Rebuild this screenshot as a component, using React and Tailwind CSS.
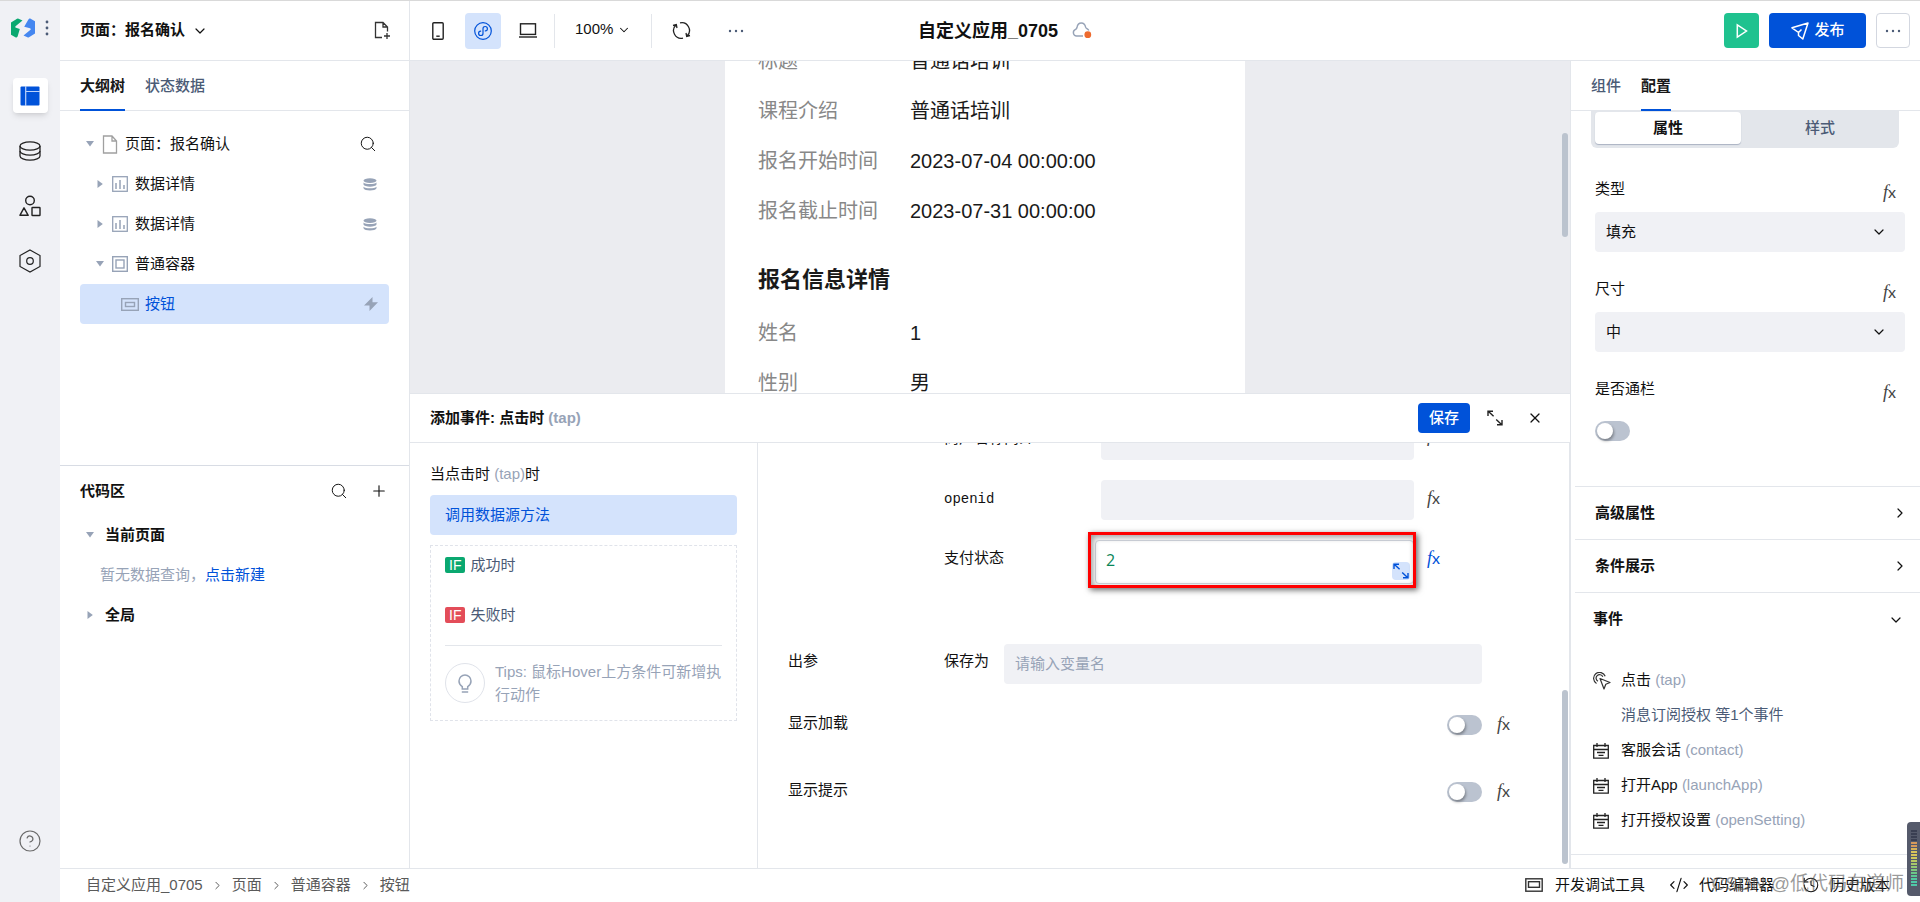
import React, { useState } from 'react';
import {
  ChevronDown,
  ChevronRight,
  CircleHelp,
  CodeXml,
  History,
  Plus,
  Search,
  X,
} from 'lucide-react';

const previewTop = [
  { label: '标题', value: '普通话培训' },
  { label: '课程介绍', value: '普通话培训' },
  { label: '报名开始时间', value: '2023-07-04 00:00:00' },
  { label: '报名截止时间', value: '2023-07-31 00:00:00' },
];

const previewBottom = [
  { label: '姓名', value: '1' },
  { label: '性别', value: '男' },
];

const otherEvents = [
  { name: '客服会话', code: '(contact)' },
  { name: '打开App', code: '(launchApp)' },
  { name: '打开授权设置', code: '(openSetting)' },
];

const Logo = () => (
  <svg width="24" height="20" viewBox="0 0 24 20">
    <path d="M0 4.5 6 0.8Q6.8 0.4 7.6 0.8L11.5 2.6 4.5 8.2Q3.6 9.3 5 9.8L8.8 11 6.6 18.6 5.6 19.6 4.8 19.5 0 16.8Z" fill="#0aa870" />
    <path d="M24 15.5 18 19.2Q17.2 19.6 16.4 19.2L12.5 17.4 19.5 11.8Q20.4 10.7 19 10.2L13.2 8.8 17.4 1.4 18.4 0.4 19.2 0.5 24 3.2Z" fill="#4587f0" />
  </svg>
);

const Dots = ({ vertical }) => (
  <svg
    width={vertical ? 4 : 18}
    height={vertical ? 16 : 4}
    viewBox={vertical ? '0 0 4 16' : '0 0 18 4'}
    fill="#4b5b76"
  >
    {[2, 8, 14].map((p) =>
      vertical ? <circle key={p} cx="2" cy={p} r="1.4" /> : <circle key={p} cx={p + 1} cy="2" r="1.2" />
    )}
  </svg>
);

const LayoutIcon = () => (
  <svg width="20" height="20" viewBox="0 0 20 20">
    <rect x="0.5" y="0.5" width="19" height="19" rx="1" fill="#0052d9" />
    <path d="M5.7 0V20M5.7 5.5H20" stroke="#bcd2fa" strokeWidth="1.2" />
  </svg>
);

const DatabaseIcon = () => (
  <svg width="22" height="20" viewBox="0 0 22 20" fill="none" stroke="#222" strokeWidth="1.3">
    <ellipse cx="11" cy="5" rx="10" ry="4.2" />
    <path d="M1 5V15C1 17.3 5.5 19.2 11 19.2S21 17.3 21 15V5" />
    <path d="M1 10C1 12.3 5.5 14.2 11 14.2S21 12.3 21 10" />
  </svg>
);

const ShapesIcon = () => (
  <svg width="22" height="22" viewBox="0 0 22 22" fill="none" stroke="#222" strokeWidth="1.4">
    <circle cx="11" cy="5.5" r="4.3" />
    <path d="M5 12.8 9.2 20.3H0.9Z" strokeLinejoin="round" />
    <rect x="13" y="12.5" width="8" height="8" rx="0.6" />
  </svg>
);

const HexIcon = () => (
  <svg width="22" height="24" viewBox="0 0 22 24" fill="none" stroke="#222" strokeWidth="1.2">
    <path d="M11 1 21 6.5V17.5L11 23 1 17.5V6.5Z" />
    <circle cx="11" cy="12" r="3.3" />
  </svg>
);

const FileIcon = () => (
  <svg width="16" height="19" viewBox="0 0 16 19" fill="none" stroke="#a0a0a0" strokeWidth="1.3">
    <path d="M1.5 1H10L14.5 6V18H1.5ZM10 1V6H14.5" />
  </svg>
);

const FileAddIcon = () => (
  <svg width="17" height="19" viewBox="0 0 17 19" fill="none" stroke="#333" strokeWidth="1.3">
    <path d="M8 16.5H1.5V1.5H9L13.5 6V10.5M9 1.5V6H13.5M13 12V18M10 15H16" />
  </svg>
);

const ChartIcon = () => (
  <svg width="16" height="16" viewBox="0 0 16 16" fill="none" stroke="#97a3b7">
    <rect x="0.7" y="0.7" width="14.6" height="14.6" strokeWidth="1.3" />
    <path d="M4 7V13M8 4V13M12 9V13" strokeWidth="1.5" />
  </svg>
);

const ContainerIcon = () => (
  <svg width="16" height="16" viewBox="0 0 16 16" fill="none" stroke="#97a3b7" strokeWidth="1.4">
    <rect x="0.7" y="0.7" width="14.6" height="14.6" />
    <rect x="4" y="4" width="8" height="8" />
  </svg>
);

const ButtonIcon = () => (
  <svg width="18" height="13" viewBox="0 0 18 13" fill="none" stroke="#97a3b7" strokeWidth="1.4">
    <rect x="0.7" y="0.7" width="16.6" height="11.6" />
    <rect x="4.5" y="4.5" width="9" height="4" />
  </svg>
);

const StackIcon = () => (
  <svg width="14" height="13" viewBox="0 0 14 13" fill="#97a3b7">
    <ellipse cx="7" cy="2.6" rx="6.5" ry="2.4" />
    <path d="M0.5 4.6C2.5 6.6 11.5 6.6 13.5 4.6V6.6C12.5 9.4 1.5 9.4 0.5 6.6Z" />
    <path d="M0.5 8.7C2.5 10.7 11.5 10.7 13.5 8.7V10.2C12.5 13.2 1.5 13.2 0.5 10.2Z" />
  </svg>
);

const BoltIcon = () => (
  <svg width="16" height="14" viewBox="0 0 16 14" fill="#97a3b7">
    <path d="M9.5 0 1 8.5H6.5V14L15 5.3H9.5Z" />
  </svg>
);

const Caret = ({ open }) => (
  <svg width="8" height="8" viewBox="0 0 8 8" fill="#97a3b7">
    <path d={open ? 'M0 1H8L4 6.5Z' : 'M1.5 0 6.8 4 1.5 8Z'} />
  </svg>
);

const PhoneIcon = () => (
  <svg width="12" height="18" viewBox="0 0 12 18" fill="none" stroke="#222" strokeWidth="1.4">
    <rect x="0.8" y="0.8" width="10.4" height="16.4" rx="1" />
    <path d="M4.3 14.2H7.7" />
  </svg>
);

const MiniProgramIcon = () => (
  <svg width="18" height="18" viewBox="0 0 18 18" fill="none" stroke="#0052d9" strokeWidth="1.2">
    <circle cx="9" cy="9" r="8.3" />
    <path d="M6.7 9.1A2.2 2.2 0 1 0 9 11.2V6.8A2.2 2.2 0 1 1 11.3 8.9" strokeLinecap="round" />
  </svg>
);

const LaptopIcon = () => (
  <svg width="18" height="15" viewBox="0 0 18 15" fill="none" stroke="#222" strokeWidth="1.4">
    <rect x="1.5" y="0.8" width="15" height="10.6" />
    <path d="M0 14H18" />
  </svg>
);

const RefreshIcon = () => (
  <svg width="19" height="19" viewBox="0 0 19 19" fill="none" stroke="#222" strokeWidth="1.3">
    <path d="M11 17.1A7.7 7.7 0 0 1 4 4M1 4.5 4.3 3.6 5 7" />
    <path d="M8 1.9A7.7 7.7 0 0 1 15 15M18 14.5 14.7 15.4 14 12" />
  </svg>
);

const CloudIcon = () => (
  <svg width="20" height="17" viewBox="0 0 20 17" fill="none">
    <path d="M11 14H4.5A3.4 3.4 0 0 1 3.2 7.6C4 7.2 4.8 6.5 5 5.5 5.4 3 7 1 9.3 1S13.2 3 13.6 5.2C13.9 6.6 16 6.6 16.8 8.6" stroke="#97a3b7" strokeWidth="1.4" />
    <circle cx="15.8" cy="12.7" r="3.4" fill="#ee6b2f" />
  </svg>
);

const SendIcon = () => (
  <svg width="18" height="18" viewBox="0 0 18 18" fill="none" stroke="#fff" strokeWidth="1.5" strokeLinejoin="round">
    <path d="M1 5.8 17 1 11.8 17 7.5 13.5V10.5L1 5.8ZM7.5 10.5 10.5 7.5" />
  </svg>
);

const PlayIcon = () => (
  <svg width="12" height="16" viewBox="0 0 12 16" fill="none" stroke="#fff" strokeWidth="1.5">
    <path d="M1.3 1.8 10.5 8 1.3 14.2Z" />
  </svg>
);

const ExpandIcon = ({ color = '#222' }) => (
  <svg width="16" height="16" viewBox="0 0 16 16" fill="none" stroke={color} strokeWidth="1.4">
    <path d="M1 6V1.2H6M1.2 1.2 6.6 6.2M15 10V14.8H10M14.8 14.8 9.2 9.6" />
  </svg>
);

const BulbIcon = () => (
  <svg width="14" height="19" viewBox="0 0 14 19" fill="none" stroke="#97a3b7" strokeWidth="1.5">
    <path d="M4.3 15V12.6C2.2 11.3 1 9.4 1 7A6 6 0 0 1 13 7C13 9.4 11.8 11.3 9.7 12.6V15ZM3.8 18H10.2" />
  </svg>
);

const TapIcon = () => (
  <svg width="18" height="18" viewBox="0 0 18 18" fill="none" stroke="#333" strokeWidth="1.2">
    <path d="M3.5 11.5A6 6 0 1 1 12.2 4.2M5 9.3A3.5 3.5 0 1 1 9.8 4.8" />
    <path d="M7 6.5 17 10.5 12.8 12.3 11 17Z" strokeLinejoin="round" />
  </svg>
);

const EventIcon = () => (
  <svg width="16" height="16" viewBox="0 0 16 16" fill="none" stroke="#222" strokeWidth="1.3">
    <path d="M0.7 2.5H15.3V15.2H0.7ZM0.7 6.5H15.3M4 0V4M12 0V4M4 9.5H12M5.5 12.3H10.5" />
  </svg>
);

const PanelIcon = () => (
  <svg width="18" height="14" viewBox="0 0 18 14" fill="none" stroke="#333" strokeWidth="1.4">
    <rect x="0.8" y="0.8" width="16.4" height="12.4" />
    <rect x="3.5" y="3.7" width="11" height="5.6" />
  </svg>
);

const FxButton = ({ active }) => (
  <button
    type="button"
    className={`flex w-4 shrink-0 items-baseline leading-5 ${active ? 'text-[#0052d9]' : 'text-[#444]'}`}
    aria-label="绑定表达式"
  >
    <span className="font-['Liberation_Serif',serif] text-lg leading-5 italic">f</span>
    <span className="font-['Lato',sans-serif] text-base leading-5">x</span>
  </button>
);

const Switch = ({ label }) => (
  <input
    type="checkbox"
    role="switch"
    aria-label={label}
    className="flex h-5 w-[35px] shrink-0 appearance-none items-center rounded-full bg-[#bbc3d0] px-0.5 before:size-4 before:rounded-full before:bg-white before:shadow-[1px_2px_3px_rgba(0,0,0,0.35)] checked:justify-end checked:bg-[#0052d9]"
  />
);

const TreeItem = ({ open, icon, name, pad, action }) => (
  <li className={`flex h-10 items-center pr-3 ${pad}`}>
    <Caret open={open} />
    <span className="ml-2 flex">{icon}</span>
    <span className="ml-[7px] flex-1">{name}</span>
    {action}
  </li>
);

const PreviewRow = ({ label, value }) => (
  <div className="flex h-[50px] items-center text-xl">
    <dt className="w-38 shrink-0 text-[#888]">{label}</dt>
    <dd className="text-[#1a1a1a]">{value}</dd>
  </div>
);

const Field = ({ id, label, children }) => (
  <div className="mb-2.5 h-[90px]">
    <div className="mb-1.5 flex items-end justify-between pr-1.5">
      <label htmlFor={id} className="leading-[34px]">{label}</label>
      <span className="pb-1"><FxButton /></span>
    </div>
    {children}
  </div>
);

const SelectBox = ({ id, options }) => (
  <div className="relative">
    <select id={id} className="h-10 w-full appearance-none rounded bg-[#f0f1f5] px-[11px] text-[15px]">
      {options.map((o) => (
        <option key={o}>{o}</option>
      ))}
    </select>
    <ChevronDown className="pointer-events-none absolute top-3 right-4.5 size-4" strokeWidth={1.8} />
  </div>
);

const Sidebar = () => (
  <aside className="flex w-[350px] shrink-0 flex-col border-r border-[#e3e6eb]">
    <header className="flex h-15 items-center border-b border-[#e3e6eb] pr-[18px] pl-5">
      <button className="flex items-center gap-[7px] font-bold">
        页面：报名确认
        <ChevronDown className="size-4" strokeWidth={1.8} />
      </button>
      <button className="ml-auto" aria-label="新建页面"><FileAddIcon /></button>
    </header>
    <nav className="flex h-[50px] gap-5 border-b border-[#e3e6eb] px-5">
      <button className="-mb-px border-b-2 border-[#0052d9] pt-0.5 font-bold text-[#181818]">大纲树</button>
      <button className="-mb-px border-b-2 border-transparent pt-0.5 font-medium text-[#4b5b76]">状态数据</button>
    </nav>
    <ul className="flex-1 px-5 pt-[13px]">
      <TreeItem
        open
        pad="pl-1.5"
        icon={<FileIcon />}
        name="页面：报名确认"
        action={<button aria-label="搜索"><Search className="size-[18px]" strokeWidth={1.3} /></button>}
      />
      <TreeItem pad="pl-4" icon={<ChartIcon />} name="数据详情" action={<StackIcon />} />
      <TreeItem pad="pl-4" icon={<ChartIcon />} name="数据详情" action={<StackIcon />} />
      <TreeItem open pad="pl-4" icon={<ContainerIcon />} name="普通容器" />
      <li className="flex h-10 items-center gap-1.5 rounded bg-[#d4e3fc] pr-2.5 pl-[41px] text-[#0052d9]">
        <ButtonIcon />
        <span className="flex-1">按钮</span>
        <BoltIcon />
      </li>
    </ul>
    <section className="h-[403px] border-t border-[#d8dce4] px-5 pt-[5px]">
      <div className="flex h-10 items-center pr-px">
        <h2 className="flex-1 font-bold">代码区</h2>
        <button className="mr-[22px]" aria-label="搜索代码"><Search className="size-[18px]" strokeWidth={1.3} /></button>
        <button aria-label="新建代码"><Plus className="size-[18px]" strokeWidth={1.5} /></button>
      </div>
      <div className="mt-1 flex h-10 items-center gap-[11px] pl-1.5 font-bold"><Caret open />当前页面</div>
      <p className="flex h-10 items-center pl-5 text-[#97a3b7]">
        暂无数据查询，<a href="#new" className="text-[#0052d9]">点击新建</a>
      </p>
      <div className="flex h-10 items-center gap-[11px] pl-1.5 font-bold"><Caret />全局</div>
    </section>
  </aside>
);

const Toolbar = () => (
  <header className="flex h-15 shrink-0 items-center border-b border-[#e3e6eb] pr-2.5 pl-[22px]">
    <div className="flex flex-3 items-center">
      <button className="mr-[21px]" aria-label="手机"><PhoneIcon /></button>
      <button className="flex size-9 items-center justify-center rounded bg-[#d4e3fc]" aria-label="小程序">
        <MiniProgramIcon />
      </button>
      <button className="ml-[18px]" aria-label="电脑"><LaptopIcon /></button>
      <span className="mr-5 ml-[17px] h-[34px] w-px bg-[#e3e6eb]" />
      <button className="flex items-center gap-1 pb-0.5">
        100%
        <ChevronDown className="size-3.5" strokeWidth={1.8} />
      </button>
      <span className="mr-5 ml-5 h-[34px] w-px bg-[#e3e6eb]" />
      <button className="mr-9" aria-label="刷新"><RefreshIcon /></button>
      <button aria-label="更多工具"><Dots /></button>
    </div>
    <div className="flex items-center gap-3.5 pr-2">
      <h1 className="text-lg font-bold">自定义应用_0705</h1>
      <CloudIcon />
    </div>
    <div className="flex flex-5 items-center justify-end gap-2.5">
      <button className="flex size-[35px] items-center justify-center rounded bg-[#1fc28f]" aria-label="预览">
        <PlayIcon />
      </button>
      <button className="flex h-[35px] w-[97px] items-center justify-center gap-1.5 rounded bg-[#0052d9] font-medium text-white">
        <SendIcon />
        发布
      </button>
      <button className="flex h-[35px] w-[34px] items-center justify-center rounded border border-[#d3d7e0]" aria-label="更多">
        <Dots />
      </button>
    </div>
  </header>
);

const Preview = () => (
  <section className="flex h-[332px] shrink-0 overflow-hidden bg-[#ebecf0]">
    <div className="flex-1" />
    <div className="w-[520px] bg-white px-[33px]">
      <dl className="mt-[-25px]">
        {previewTop.map((r) => <PreviewRow key={r.label} {...r} />)}
      </dl>
      <h2 className="pt-[22px] pb-1.5 text-[22px] leading-[44px] font-bold text-[#1a1a1a]">报名信息详情</h2>
      <dl>
        {previewBottom.map((r) => <PreviewRow key={r.label} {...r} />)}
      </dl>
    </div>
    <div className="flex-1" />
    <div className="w-2.5 pt-18 pl-0.5">
      <div className="h-[104px] w-1.5 rounded-full bg-[#bbc3ce]" />
    </div>
  </section>
);

const EventFlow = () => (
  <div className="w-[348px] shrink-0 border-r border-[#e3e6eb] px-5 pt-4">
    <p className="leading-[30px]">当点击时 <span className="text-[#97a3b7]">(tap)</span>时</p>
    <button className="mt-1.5 h-10 w-full rounded bg-[#d4e3fc] px-[15px] text-left text-[#0052d9]">调用数据源方法</button>
    <div className="mt-2.5 border border-dashed border-[#e0e3ea] px-3.5 pb-3.5 text-[#4b5b76]">
      <div className="flex h-[38px] items-center gap-[5px]">
        <span className="rounded-xs bg-[#0aa870] px-1 text-sm leading-4 text-white">IF</span>
        成功时
      </div>
      <div className="mt-3 flex h-[38px] items-center gap-[5px]">
        <span className="rounded-xs bg-[#e34d59] px-1 text-sm leading-4 text-white">IF</span>
        失败时
      </div>
      <div className="mt-[11px] flex items-center gap-2.5 border-t border-[#e3e6eb] pt-3.5 text-[#97a3b7]">
        <span className="flex size-10 shrink-0 items-center justify-center rounded-full border border-[#e0e3ea]">
          <BulbIcon />
        </span>
        <p className="leading-[23px]">Tips: 鼠标Hover上方条件可新增执行动作</p>
      </div>
    </div>
  </div>
);

const EventForm = () => {
  const [status, setStatus] = useState('2');

  return (
    <div className="flex min-w-0 flex-1 overflow-hidden border-r border-[#e3e6eb]">
      <form className="mt-[-23px] min-w-0 flex-1 pl-[30px]">
        <div className="pr-[119px] pl-39">
          <div className="flex items-center">
            <label htmlFor="trade" className="w-[157px] shrink-0 pb-1">商户名称简介</label>
            <input id="trade" className="h-10 min-w-0 flex-1 rounded bg-[#f0f1f5] px-3" />
            <span className="ml-[13px] pb-2"><FxButton /></span>
          </div>
          <div className="mt-5 flex items-center">
            <label htmlFor="openid" className="w-[157px] shrink-0 pb-0.5 font-['Liberation_Mono',monospace] text-sm">openid</label>
            <input id="openid" className="h-10 min-w-0 flex-1 rounded bg-[#f0f1f5] px-3" />
            <span className="ml-[13px] pb-1"><FxButton /></span>
          </div>
          <div className="mt-5 flex items-center">
            <label htmlFor="status" className="w-[151px] shrink-0 pb-2">支付状态</label>
            <div className="relative min-w-0 flex-1">
              <input
                id="status"
                value={status}
                onChange={(e) => setStatus(e.target.value)}
                className="block h-11 w-full rounded border border-[#d3d7e0] px-2.5 pb-1 font-['Open_Sans',sans-serif] text-base text-[#098658]"
              />
              <button type="button" className="absolute right-1 bottom-1 rounded bg-[#d4e3fc] p-px" aria-label="展开">
                <ExpandIcon color="#0052d9" />
              </button>
              <div className="pointer-events-none absolute -top-2 -right-0.5 -bottom-1 -left-[7px] border-3 border-[#f00] shadow-[2px_2px_6px_rgba(0,0,0,0.6),inset_2px_2px_6px_rgba(0,0,0,0.4)]" />
            </div>
            <span className="ml-[13px] self-start pt-2"><FxButton active /></span>
          </div>
        </div>
        <div className="mt-15 flex items-center pr-20">
          <span className="w-39 shrink-0 pb-1.5">出参</span>
          <label htmlFor="output" className="w-15 shrink-0 pb-1.5">保存为</label>
          <input
            id="output"
            placeholder="请输入变量名"
            className="h-10 min-w-0 flex-1 rounded bg-[#f0f1f5] px-[11px] pb-0.5 placeholder:text-[#97a3b7]"
          />
        </div>
        <div className="mt-[23px] flex h-9 items-center pr-[49px]">
          <span className="flex-1 pb-1">显示加载</span>
          <Switch label="显示加载" />
          <span className="ml-[15px] pb-0.5"><FxButton /></span>
        </div>
        <div className="mt-[31px] flex h-9 items-center pr-[49px]">
          <span className="flex-1 pb-1">显示提示</span>
          <Switch label="显示提示" />
          <span className="ml-[15px] pb-0.5"><FxButton /></span>
        </div>
      </form>
      <div className="mr-px mb-1 h-[174px] w-1.5 self-end rounded-full bg-[#bbc3ce]" />
    </div>
  );
};

const ConfigPanel = () => (
  <aside className="flex w-[350px] shrink-0 flex-col overflow-hidden border-l border-[#e3e6eb]">
    <nav className="flex h-[50px] shrink-0 gap-5 border-b border-[#e3e6eb] px-5">
      <button className="-mb-px border-b-2 border-transparent pt-0.5 font-medium text-[#4b5b76]">组件</button>
      <button className="-mb-px border-b-2 border-[#0052d9] pt-0.5 font-bold text-[#181818]">配置</button>
    </nav>
    <div className="mr-[21px] ml-5 flex h-[37px] shrink-0 rounded-b-md bg-[#e3e6eb] pt-px pb-1 pl-1">
      <button className="w-[146px] rounded-sm bg-white font-bold shadow-[0_1px_1px_#aab2c2]">属性</button>
      <button className="flex-1 font-medium text-[#4b5b76]">样式</button>
    </div>
    <div className="pt-6 pr-[15px] pl-6">
      <Field id="type" label="类型"><SelectBox id="type" options={['填充', '描边']} /></Field>
      <Field id="size" label="尺寸"><SelectBox id="size" options={['中', '小']} /></Field>
      <Field id="block" label="是否通栏">
        <div className="pt-[9px]"><Switch label="是否通栏" /></div>
      </Field>
    </div>
    <div className="mt-3.5 pl-1">
      {['高级属性', '条件展示'].map((t) => (
        <button key={t} className="flex h-[53px] w-full items-center justify-between border-t border-[#e3e6eb] pr-3 pl-5 font-bold">
          {t}
          <ChevronRight className="size-4" strokeWidth={1.8} />
        </button>
      ))}
      <button className="flex h-[54px] w-full items-center justify-between border-t border-[#e3e6eb] pr-4 pl-[18px] font-bold">
        事件
        <ChevronDown className="size-4" strokeWidth={1.8} />
      </button>
    </div>
    <ul className="mt-[17px] border-b border-[#e3e6eb] pb-4 pl-[22px]">
      <li className="flex h-[35px] items-center gap-2.5">
        <TapIcon />
        <span>点击 <span className="text-[#97a3b7]">(tap)</span></span>
      </li>
      <li className="flex h-[35px] items-center pl-7 text-[#4b5b76]">消息订阅授权 等1个事件</li>
      {otherEvents.map((e) => (
        <li key={e.code} className="flex h-[35px] items-center gap-3">
          <EventIcon />
          <span>{e.name} <span className="text-[#97a3b7]">{e.code}</span></span>
        </li>
      ))}
    </ul>
  </aside>
);

const Footer = () => (
  <footer className="flex h-[34px] shrink-0 items-center border-t border-[#e3e6eb] pr-[30px] pb-px pl-[26px]">
    <nav className="flex items-center gap-2 text-[#5a5a5a]">
      <a href="#app">自定义应用_0705</a>
      <ChevronRight className="size-[13px]" strokeWidth={1.8} />
      <a href="#page">页面</a>
      <ChevronRight className="size-[13px]" strokeWidth={1.8} />
      <a href="#container">普通容器</a>
      <ChevronRight className="size-[13px]" strokeWidth={1.8} />
      <a href="#button">按钮</a>
    </nav>
    <div className="ml-auto flex items-center gap-6">
      <button className="flex items-center gap-3"><PanelIcon />开发调试工具</button>
      <button className="flex items-center gap-2.5"><CodeXml className="size-5" strokeWidth={1.4} />代码编辑器</button>
      <button className="ml-1 flex items-center gap-2.5"><History className="size-[18px]" strokeWidth={1.4} />历史版本</button>
    </div>
  </footer>
);

const levelBars = [
  'bg-[#3a3f52]', 'bg-[#3a3f52]', 'bg-[#3a3f52]', 'bg-[#3a3f52]', 'bg-[#d79a5b]',
  'bg-[#d79a5b]', 'bg-[#d8b35a]', 'bg-[#d8c45a]', 'bg-[#d8c45a]', 'bg-[#cfc95c]',
  'bg-[#b9c963]', 'bg-[#a6c86b]', 'bg-[#93c873]', 'bg-[#7fc77d]', 'bg-[#6cc788]',
  'bg-[#5cc794]', 'bg-[#52c8a0]', 'bg-[#4fcaa8]', 'bg-[#4fcaa8]',
];

const App = () => {
  return (
    <div className="relative flex h-screen overflow-hidden border-t border-[#d9d9d9] bg-white font-['Liberation_Sans','Noto_Sans_CJK_SC',sans-serif] text-[15px] text-[#111]">
      <nav className="flex w-15 shrink-0 flex-col items-center bg-[#f0f1f5] pt-[17px] pb-[49px]">
        <div className="flex items-center gap-2.5"><Logo /><Dots vertical /></div>
        <button className="mt-10 flex size-[35px] items-center justify-center rounded bg-white shadow-md" aria-label="页面设计">
          <LayoutIcon />
        </button>
        <button className="mt-7" aria-label="数据源"><DatabaseIcon /></button>
        <button className="mt-[34px]" aria-label="素材"><ShapesIcon /></button>
        <button className="mt-8" aria-label="设置"><HexIcon /></button>
        <button className="mt-auto" aria-label="帮助">
          <CircleHelp className="size-6 text-[#6a6a6a]" strokeWidth={1.2} />
        </button>
      </nav>
      <div className="flex min-w-0 flex-1 flex-col">
        <div className="flex min-h-0 flex-1">
          <Sidebar />
          <div className="flex min-w-0 flex-1 flex-col">
            <Toolbar />
            <div className="flex min-h-0 flex-1">
              <main className="flex min-w-0 flex-1 flex-col">
                <Preview />
                <section className="flex min-h-0 flex-1 flex-col border-t border-[#e3e6eb]">
                  <header className="flex h-[49px] shrink-0 items-center border-b border-[#e3e6eb] pr-[27px] pl-5">
                    <h2 className="flex-1 font-bold">添加事件: 点击时 <span className="text-[#97a3b7]">(tap)</span></h2>
                    <button className="h-[30px] w-[52px] rounded bg-[#0052d9] font-medium text-white">保存</button>
                    <button className="ml-[17px]" aria-label="全屏"><ExpandIcon /></button>
                    <button className="ml-6" aria-label="关闭"><X className="size-4" strokeWidth={1.8} /></button>
                  </header>
                  <div className="flex min-h-0 flex-1">
                    <EventFlow />
                    <EventForm />
                  </div>
                </section>
              </main>
              <ConfigPanel />
            </div>
          </div>
        </div>
        <Footer />
      </div>
      <span className="pointer-events-none absolute right-4 bottom-1 text-[19px] leading-7 text-[#555]/60">CSDN @低代码布道师</span>
      <div className="absolute right-0 bottom-1.5 flex h-[74px] w-[13px] flex-col gap-px rounded-l bg-[#555a6b] pt-2 pl-1">
        {levelBars.map((c, i) => <span key={i} className={`h-0.5 w-1.5 shrink-0 ${c}`} />)}
      </div>
    </div>
  );
};

export default App;
